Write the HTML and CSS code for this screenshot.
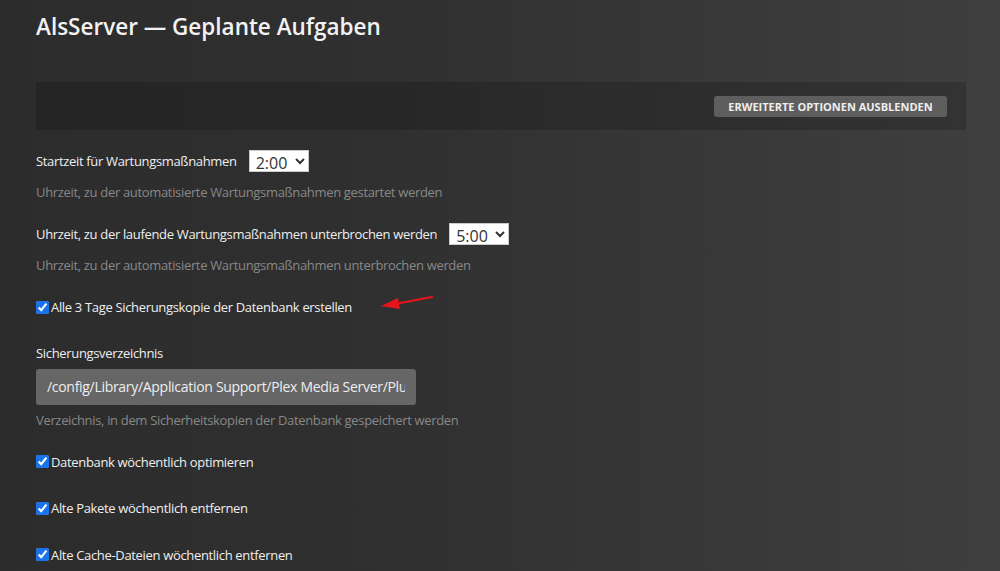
FILE: index.html
```html
<!DOCTYPE html>
<html lang="de">
<head>
    <meta charset="UTF-8">
    <meta name="viewport" content="width=device-width, initial-scale=1.0">
    <title>AlsServer — Geplante Aufgaben</title>
    <link rel="stylesheet" href="styles.css">
</head>
<body>
    <h1>AlsServer — Geplante Aufgaben</h1>

    <div class="toolbar">
        <button class="btn-advanced">Erweiterte Optionen ausblenden</button>
    </div>

    <div class="setting setting-first">
        <div class="inline-row">
            <label for="start">Startzeit für Wartungsmaßnahmen</label>
            <select id="start" class="time-select">
                <option>2:00</option>
            </select>
        </div>
        <div class="help">Uhrzeit, zu der automatisierte Wartungsmaßnahmen gestartet werden</div>
    </div>

    <div class="setting">
        <div class="inline-row">
            <label for="stop">Uhrzeit, zu der laufende Wartungsmaßnahmen unterbrochen werden</label>
            <select id="stop" class="time-select">
                <option>5:00</option>
            </select>
        </div>
        <div class="help">Uhrzeit, zu der automatisierte Wartungsmaßnahmen unterbrochen werden</div>
    </div>

    <div class="check-row check-backup">
        <label><input type="checkbox" checked> Alle 3 Tage Sicherungskopie der Datenbank erstellen</label>
        <svg class="arrow" width="60" height="20" viewBox="0 0 60 20">
            <line x1="56" y1="3" x2="24" y2="9" stroke="#e8141b" stroke-width="2.2" stroke-linecap="round"/>
            <polygon points="5,12 22,4 24,15" fill="#e8141b"/>
        </svg>
    </div>

    <div class="setting setting-dir">
        <div class="field-label">Sicherungsverzeichnis</div>
        <input class="path-input" type="text" value="/config/Library/Application Support/Plex Media Server/Plug-in Support/Databases">
        <div class="help help-tight">Verzeichnis, in dem Sicherheitskopien der Datenbank gespeichert werden</div>
    </div>

    <div class="check-row check-first">
        <label><input type="checkbox" checked> Datenbank wöchentlich optimieren</label>
    </div>
    <div class="check-row">
        <label><input type="checkbox" checked> Alte Pakete wöchentlich entfernen</label>
    </div>
    <div class="check-row">
        <label><input type="checkbox" checked> Alte Cache-Dateien wöchentlich entfernen</label>
    </div>
</body>
</html>
```

FILE: styles.css
```css
html {
    height: 100%;
}
body {
    font-family: 'Open Sans', 'Noto Sans', sans-serif;
    font-size: 13px;
    line-height: 20px;
    letter-spacing: -0.33px;
    color: #eee;
    margin: 0;
    padding: 0 34px 0 36px;
    min-height: 100%;
    background: linear-gradient(90deg, #2c2c2c 0%, #303030 40%, #3f3f3f 100%);
    overflow: hidden;
}
h1 {
    font-size: 22.5px;
    font-weight: 600;
    line-height: 30px;
    letter-spacing: 0;
    margin: 12px 0 0;
    color: #f2f2f2;
}
.toolbar {
    margin-top: 40px;
    height: 48px;
    background: rgba(0, 0, 0, 0.17);
    display: flex;
    justify-content: flex-end;
    align-items: center;
    padding-right: 19px;
}
.btn-advanced {
    font-family: 'Open Sans', sans-serif;
    font-size: 11px;
    font-weight: 700;
    letter-spacing: 0;
    text-transform: uppercase;
    color: #eee;
    background: #5e5e5e;
    border: 0;
    border-radius: 3px;
    height: 21px;
    width: 233px;
    padding: 0;
    margin-top: 1px;
}
.setting {
    margin-top: 21px;
}
.setting-first {
    margin-top: 20px;
}
.inline-row {
    display: flex;
    align-items: center;
    gap: 12px;
}
.time-select {
    font-family: 'Open Sans', sans-serif;
    font-size: 16px;
    letter-spacing: 0;
    height: 22px;
    width: 60px;
    color: #333;
    background: #fff;
    border: 1px solid #ccc;
    border-radius: 0;
    padding: 0 0 0 2px;
}
.help {
    color: #888;
    margin-top: 10px;
}
.help-tight {
    margin-top: 5px;
}
.check-row {
    margin-top: 25px;
}
.check-backup {
    margin-top: 22px;
    position: relative;
}
.check-first {
    margin-top: 22px;
}
.check-row label {
    display: inline-flex;
    align-items: center;
}
.check-row input {
    width: 13px;
    height: 13px;
    margin: 0 2px 0 0;
    accent-color: #1a73e8;
}
.arrow {
    position: absolute;
    left: 340px;
    top: -3px;
}
.setting-dir {
    margin-top: 24px;
}
.field-label {
    margin-bottom: 6px;
}
.path-input {
    display: block;
    box-sizing: border-box;
    width: 380px;
    height: 36px;
    font-family: 'Open Sans', sans-serif;
    font-size: 14px;
    letter-spacing: -0.3px;
    color: #eee;
    background: #666;
    border: 0;
    border-radius: 3px;
    padding: 0 11px;
}
```
